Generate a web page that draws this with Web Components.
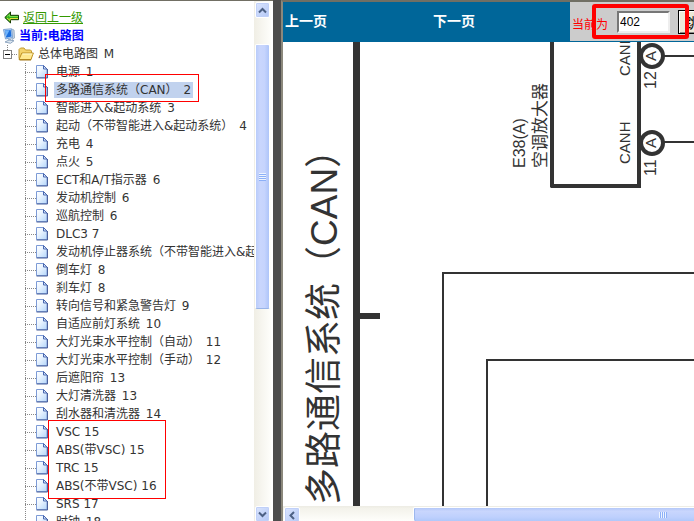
<!DOCTYPE html>
<html lang="zh-CN">
<head>
<meta charset="utf-8">
<title>电路图</title>
<style>
  body { margin: 0; background: #fff; font: 12px/18px "DejaVu Sans", "Noto Sans CJK SC", sans-serif; color: #333; }
</style>
</head>
<body>
<manual-app></manual-app>

<script>
const define = (name, html, setup) => {
  const template = document.createElement('template');
  template.innerHTML = html;
  customElements.define(name, class extends HTMLElement {
    constructor() {
      super();
      this.attachShadow({ mode: 'open' }).append(template.content.cloneNode(true));
    }
    connectedCallback() { if (setup) setup(this, this.shadowRoot); }
  });
};

define('scroll-strip', `
<style>
  :host { display: flex; flex-direction: column; width: 17px; box-sizing: border-box; padding: 1px; gap: 0; background: linear-gradient(90deg, #f0eee5, #fefefb); overflow: hidden; }
  :host([horizontal]) { flex-direction: row; width: auto; height: 15px; background: linear-gradient(#eeede5 1px, #f3f2ea 2px, #fefefb); padding: 1px 0 0 1px; }
  button { flex: none; display: grid; place-items: center; width: 15px; height: 16px; padding: 0; border: 1px solid #fff; border-radius: 2px; background: linear-gradient(135deg, #dbe5fe, #b4c8f6); box-shadow: inset 0 0 0 1px #c0d0f8; }
  :host([horizontal]) button { width: 16px; }
  svg { display: block; }
  .before { flex: 0 0 26px; }
  .thumb { flex: 0 0 265px; display: grid; place-items: center; box-sizing: border-box; border: 1px solid #fff; border-bottom-color: #98b4e8; border-radius: 2px; background: linear-gradient(90deg, #b9ccfa, #c9d6fd 30%, #c6d4fd 65%, #aec5f9); }
  .after { flex: 1; }
  :host([horizontal]) .before { flex-basis: 113px; }
  :host([horizontal]) .thumb { flex: 1 0 500px; border-color: #fff; border-bottom: 0; background: linear-gradient(#b4c8f8, #c9d6fd 25%, #bed0fd 70%, #b0c8fa); box-shadow: inset 1px 0 #9db8ee; }
  :host([horizontal]) .after, :host([horizontal]) .end { display: none; }
  .grip { width: 7px; height: 8px; background: repeating-linear-gradient(#eef4fe 0 1px, #8cb0f8 1px 2px); }
  :host([horizontal]) .grip { width: 8px; height: 6px; background: repeating-linear-gradient(90deg, #eef4fe 0 1px, #8cb0f8 1px 2px); }
</style>
<button class="start" aria-label="向前滚动"><svg width="9" height="9" viewBox="0 0 9 9" fill="none" stroke="#4d6185" stroke-width="2"><path d="M1 6.500 4.500 3 8 6.500"/></svg></button>
<div class="before"></div>
<div class="thumb"><div class="grip"></div></div>
<div class="after"></div>
<button class="end" aria-label="向后滚动"><svg width="9" height="9" viewBox="0 0 9 9" fill="none" stroke="#4d6185" stroke-width="2"><path d="M1 2.500 4.500 6 8 2.500"/></svg></button>
`, (host, root) => {
  if (host.hasAttribute('horizontal')) root.querySelector('.start path').setAttribute('d', 'M6 1 2.500 4.500 6 8');
});

define('tree-item', `
<style>
  :host { display: flex; align-items: center; height: 18px; white-space: nowrap; }
  .dots { flex: none; width: 11px; height: 1px; background: repeating-linear-gradient(90deg, #888 0 1px, transparent 1px 2px); }
  svg { flex: none; display: block; margin-right: 6px; }
  a { color: #333; text-decoration: none; padding: 0 2px; line-height: 16px; }
  :host([selected]) a { background: #c1d2ee; }
  :host([wide]) .page { margin-left: 2px; }
</style>
<span class="dots"></span>
<svg width="12" height="14" viewBox="0 0 12 14"><defs><linearGradient id="p" x1="0" y1="0" x2="1" y2="1"><stop offset="0" stop-color="#fff"/><stop offset=".4" stop-color="#eaf4ff"/><stop offset="1" stop-color="#b4d6fa"/></linearGradient></defs><path d="M.5 .5H7.500L11 4V12.500H.5Z" fill="url(#p)" stroke="#7d9bd6"/><path d="M7.500 .5V4H11Z" fill="#d3e4fb" stroke="#4a68b0"/><path d="M.5 13H11.500V4" stroke="#4b609b" fill="none"/></svg>
<a href="#"><slot></slot> <span class="page"></span></a>
`, (host, root) => { root.querySelector('.page').textContent = host.getAttribute('page'); });

define('contents-tree', `
<style>
  :host { display: grid; grid-template-columns: minmax(0, 1fr) 17px; min-height: 0; overflow: hidden; padding-right: 2px; }
  nav { position: relative; overflow: hidden; padding-top: 7px; }
  scroll-strip { height: calc(100vh + 1px); }
  .line { display: flex; align-items: center; height: 18px; white-space: nowrap; }
  .back { height: 19px; padding-left: 4px; gap: 3px; }
  .back a { color: #390; }
  .now { padding-left: 2px; gap: 2px; color: #00f; font-weight: bold; }
  .root { padding-left: 3px; background: repeating-linear-gradient(#888 0 1px, transparent 1px 2px) 7px 0 / 1px 5px no-repeat; }
  .root button { flex: none; display: block; width: 9px; height: 9px; padding: 0; border: 1px solid #808080; background: linear-gradient(#000, #000) center / 5px 1px no-repeat #fff; }
  .root i { width: 6px; height: 1px; background: repeating-linear-gradient(90deg, #888 0 1px, transparent 1px 2px); }
  .root b { font-weight: normal; margin-left: 4px; }
  .root span { margin-left: 2px; }
  .items { margin-left: 25px; background: repeating-linear-gradient(#888 0 1px, transparent 1px 2px) left / 1px 100% no-repeat; }
  .mark { position: absolute; box-sizing: border-box; border: 1px solid #f00; pointer-events: none; }
  .one { left: 45px; top: 73px; width: 154px; height: 28px; }
  .two { left: 48px; top: 419px; width: 118px; height: 79px; }
  svg { display: block; flex: none; }
</style>
<nav aria-label="目录">
  <div class="line back">
    <svg width="16" height="13" viewBox="0 0 16 13"><path d="M.8 6.500 6.500 1V4.300H14.500V8.700H6.500V12Z" fill="#2fb01c" stroke="#143c00"/><path d="M3 7 6 9.500V7.500H14" fill="none" stroke="#dfe03a"/><path d="M3 5.500 5.500 3.500V5.500H14" fill="none" stroke="#7be04c"/></svg>
    <a href="#">返回上一级</a>
  </div>
  <div class="line now">
    <svg width="15" height="16" viewBox="0 0 15 16"><path d="M9.500 1 12 2 12.500 10 10 11.500Z" fill="#c6d3e0" stroke="#9db2c8"/><path d="M1.500 1.500 9.500 .8 10.500 9.500 3.500 11Z" fill="#c3dcf6" stroke="#7ba2d4"/><path d="M2.700 2.600 8.700 2 9.500 8.600 4.300 9.700Z" fill="#1c6fdd"/><path d="M2.900 2.800 7.500 2.300 4.200 8.500Z" fill="#70b4fb"/><path d="M6 11 9 10.500V12.500L6.500 13Z" fill="#9fb4ca"/><path d="M3 14 7 12 12 12.700 8.500 15.300Z" fill="#dbe6f0" stroke="#8fa6c0"/></svg>
    <span>当前:电路图</span>
  </div>
  <div class="line root">
    <button aria-label="折叠"></button><i></i>
    <svg width="16" height="14" viewBox="0 0 16 14"><path d="M1 11.500V2.500L2.500 1H6L7.500 3H12.500L13.500 4V12Z" fill="#f4d36b" stroke="#c39a35"/><path d="M1 12.500 3.800 6H15.400L13 12.500Z" fill="#ffe88e" stroke="#bd9127"/><path d="M4.500 7H14.300" stroke="#fff9d0"/><path d="M1.500 13H13" stroke="#a67b1b"/></svg>
    <b>总体电路图 <span>M</span></b>
  </div>
  <div class="items"></div>
  <div class="mark one"></div>
  <div class="mark two"></div>
</nav>
<scroll-strip></scroll-strip>
`, (host, root) => {
  const rows = [['电源', 1], ['多路通信系统（CAN）', 2], ['智能进入&起动系统', 3], ['起动（不带智能进入&起动系统）', 4], ['充电', 4], ['点火', 5], ['ECT和A/T指示器', 6], ['发动机控制', 6], ['巡航控制', 6], ['DLC3', 7], ['发动机停止器系统（不带智能进入&起动系统）', 7], ['倒车灯', 8], ['刹车灯', 8], ['转向信号和紧急警告灯', 9], ['自适应前灯系统', 10], ['大灯光束水平控制（自动）', 11], ['大灯光束水平控制（手动）', 12], ['后遮阳帘', 13], ['大灯清洗器', 13], ['刮水器和清洗器', 14], ['VSC', 15], ['ABS(带VSC)', 15], ['TRC', 15], ['ABS(不带VSC)', 16], ['SRS', 17], ['时钟', 18]];
  root.querySelector('.items').append(...rows.map(([name, page], i) => {
    const item = document.createElement('tree-item');
    item.textContent = name;
    item.setAttribute('page', page);
    item.toggleAttribute('wide', !/[\w)]$/.test(name));
    item.toggleAttribute('selected', i === 1);
    return item;
  }));
});

define('page-toolbar', `
<style>
  :host { position: relative; display: grid; grid-template-columns: 148px minmax(0, 1fr) 124px; height: 40px; background: #069; border-bottom: 1px solid #069; box-sizing: border-box; overflow: hidden; }
  a { align-self: center; padding-left: 2px; margin-bottom: 2px; color: #fff; font-weight: bold; font-size: 14px; text-decoration: none; }
  form { display: flex; align-items: center; padding-left: 2px; background: #ccc; white-space: nowrap; overflow: hidden; }
  label { flex: none; width: 45px; padding-top: 6px; color: #f00; }
  input { flex: none; box-sizing: border-box; width: 53px; height: 22px; margin: 0 8px 0 0; padding: 0 1px; border: 2px solid; border-color: #777 #eee #eee #777; background: #fff; font: 12px "Liberation Sans", sans-serif; color: #000; }
  button { flex: none; box-sizing: border-box; height: 24px; padding: 0 6px; border: 1px solid #000; background: #ece9d8; font: 14px "Noto Sans CJK SC", sans-serif; color: #000; box-shadow: inset 1px 1px #fff, inset -1px -1px #888; }
  .mark { position: absolute; right: 5px; top: 2px; width: 97px; height: 35px; box-sizing: border-box; border: 4px solid #f00; border-radius: 3px; pointer-events: none; }
</style>
<a href="#">上一页</a><a href="#">下一页</a>
<form><label for="n">当前为</label><input id="n" value="402"><button type="button">跳转</button></form>
<div class="mark"></div>
`);

define('circuit-diagram', `
<style>
  :host { display: block; min-height: 0; overflow: hidden; background: #fff; }
  svg { display: block; overflow: visible; font-family: "Liberation Sans", "Noto Sans CJK SC", sans-serif; }
</style>
<svg width="411" height="464" viewBox="283 42 411 464" fill="#333">
  <path d="M353 42h7v2000h-7zM360 313h20v6h-20z"/>
  <path d="M550 42h4v142h83V42h4v146h-90l-1-1z"/>
  <path d="M443 2000V273H3000M487 2000V360H3000M664 56H3000M664 142H3000" fill="none" stroke="#333" stroke-width="2"/>
  <g fill="#fff" stroke="#333" stroke-width="4"><circle cx="652" cy="56" r="11"/><circle cx="652" cy="143" r="11"/></g>
  <text font-size="37" transform="translate(337 505) rotate(-90)">多路通信系统（CAN）</text>
  <text font-size="16" transform="translate(525 168) rotate(-90)">E38(A)</text>
  <text font-size="17" transform="translate(546 168) rotate(-90)">空调放大器</text>
  <g font-size="15">
    <text transform="translate(630 76) rotate(-90)">CANL</text>
    <text transform="translate(630 164) rotate(-90)">CANH</text>
    <text transform="translate(656 61) rotate(-90)">A</text>
    <text transform="translate(656 148) rotate(-90)">A</text>
  </g>
  <g font-size="16">
    <text transform="translate(656 89) rotate(-90)">12</text>
    <text transform="translate(656 176) rotate(-90)">11</text>
  </g>
</svg>
`);

define('manual-app', `
<style>
  :host { display: grid; grid-template-columns: 273px 8px minmax(0, 1fr); grid-template-rows: minmax(0, 1fr); height: 100vh; overflow: hidden; }
  contents-tree { border-top: 1px solid #716f64; }
  .divider { background: #4d4d4d; }
  main { display: grid; grid-template-columns: minmax(0, 1fr); grid-template-rows: auto minmax(0, 1fr) auto; min-width: 0; border-left: 2px solid #8b887c; border-top: 2px solid #716f64; }
</style>
<contents-tree></contents-tree>
<div class="divider"></div>
<main>
  <page-toolbar></page-toolbar>
  <circuit-diagram></circuit-diagram>
  <scroll-strip horizontal></scroll-strip>
</main>
`);
</script>
</body>
</html>
